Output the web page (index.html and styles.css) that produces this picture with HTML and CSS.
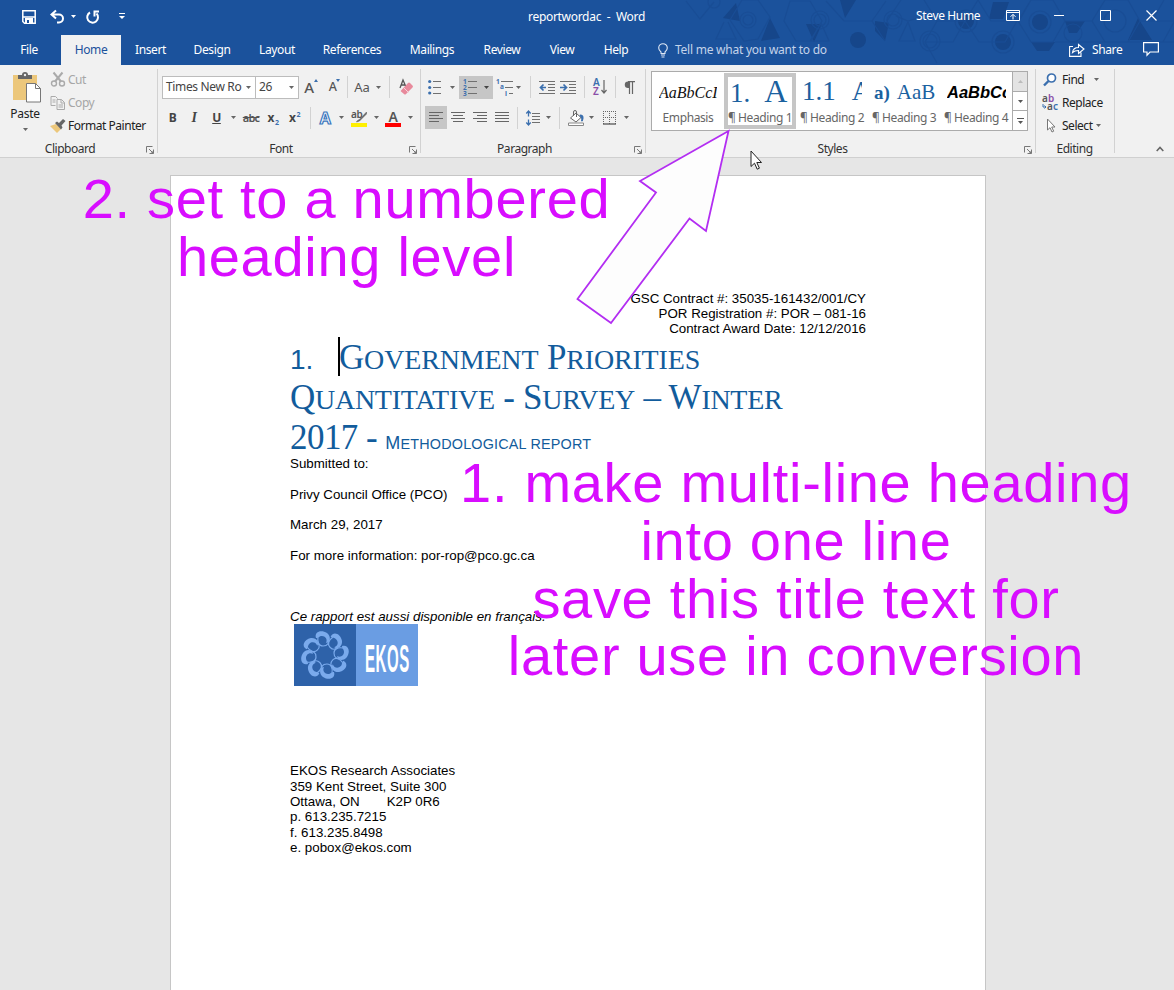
FILE: index.html
```html
<!DOCTYPE html>
<html lang="en">
<head>
<meta charset="utf-8">
<title>reportwordac - Word</title>
<link rel="stylesheet" href="styles.css">
</head>
<body>
<svg class="defs" width="0" height="0">
  <symbol id="dd" viewBox="0 0 5 3"><path d="M0 0h5L2.500 3z" fill="currentColor"/></symbol>
  <symbol id="launch" viewBox="0 0 8 8"><path d="M.5 6.500v-6h6M3 3l4 4M7.500 3.500v4h-4" fill="none" stroke="#777"/><path d="M7.500 4.500v3h-3z" fill="#777"/></symbol>
</svg>
<div class="window">
  <header class="chrome">
    <svg class="pattern" width="494" height="65" viewBox="680 0 494 65">
      <g fill="#16468a">
        <path d="M736 3l4 18-17-3zM770 18l10 20-19 3zM806 24h16l-8 18zM840 0h16l-11 18zM875 21l14 2-4 18-10-10zM1065 21h20l-8 12h-8zM1138 18l14 22h-24zM1031 42h24l-6 9h-12zM993 2h16l-6 17h-14z"/>
        <circle cx="858" cy="40" r="8"/><circle cx="1003" cy="42" r="8"/><circle cx="1040" cy="22" r="8"/><circle cx="966" cy="21" r="8"/>
      </g>
      <g fill="none" stroke="#194d95" stroke-width="1.200">
        <path d="M686 1l14 18 14-17M724 22l-8 17h20l-8-17M742 0l-12 20 14 21 14-2 12-22-12-17zM790 1l20 0 12 20-12 20h-14l-12-20zM826 1l18 20h28l14-20M822 21l-11 20h18l-8-18M872 21l13 20M908 22l-9 19h16l-7-19M887 21l14-21M924 0l13 21-12 21 12 21M937 21h28l13-21M925 42h28l12-21 14 21h26l12-21M978 0l13 21h28l12-21M1018 21l13 21h22l12-21-12-21h-22zM1065 21h27l13-21M1092 21l13 21h23l12-21-12-21h-23zM1055 42h50M1128 42h46M1140 21h34M1152 21l12-21M1163 42l11-20M896 16l12 5 14-4"/>
        <circle cx="748" cy="20" r="8"/><circle cx="748" cy="20" r="5"/><circle cx="820" cy="20" r="9"/><circle cx="820" cy="20" r="6"/><circle cx="893" cy="20" r="9"/><circle cx="893" cy="20" r="6"/><circle cx="930" cy="41" r="10"/><circle cx="930" cy="41" r="7"/><circle cx="1003" cy="42" r="11"/><circle cx="1040" cy="22" r="11"/><circle cx="1073" cy="33" r="9"/><circle cx="1115" cy="21" r="11"/><circle cx="714" cy="2" r="6"/><circle cx="966" cy="21" r="11"/>
      </g>
    </svg>
    <div class="titlebar">
      <div class="quick">
        <svg width="14" height="14" viewBox="0 0 14 14"><path d="M.8.800h12.400v12.400H2.500L.8 11.500z" fill="none" stroke="#fff" stroke-width="1.500"/><path d="M1 6.300h12v1.500H1zM3 8h8v6H3z" fill="#fff"/><path d="M5 10h2v3H5z" fill="#1b529c"/></svg>
        <svg class="undo" width="15" height="15" viewBox="0 0 15 15"><path d="M6 1.500L1.500 5.500 6 9.500M2 5.500h7a4 4 0 010 8H7" fill="none" stroke="#fff" stroke-width="2"/></svg>
        <svg class="undo-dd" width="5" height="3"><use href="#dd"/></svg>
        <svg class="redo" width="14" height="14" viewBox="0 0 14 14"><path d="M4 2.500a5.400 5.400 0 106.500 1M7.500 1.500h5.500M8.500 1.500v5" fill="none" stroke="#fff" stroke-width="2"/></svg>
        <svg class="custom" width="6" height="7" viewBox="0 0 6 7"><path d="M0 .5h6" stroke="#fff"/><path d="M0 3h6L3 6z" fill="#fff"/></svg>
      </div>
      <div class="doc-title">reportwordac&nbsp; -&nbsp; Word</div>
      <div class="user">Steve Hume</div>
      <div class="controls">
        <svg width="14" height="11" viewBox="0 0 14 11"><path d="M.5.500h13v10H.5zM.5 2.500h13M7 9.500V4.500M4.500 6.800L7 4.300l2.500 2.500" fill="none" stroke="#fff"/></svg>
        <svg width="10" height="11" viewBox="0 0 10 11"><path d="M0 5.500h10" stroke="#fff"/></svg>
        <svg width="11" height="11" viewBox="0 0 11 11"><path d="M.5.500h10v10H.5z" fill="none" stroke="#fff"/></svg>
        <svg width="11" height="11" viewBox="0 0 11 11"><path d="M.5.500l10 10M10.500.500l-10 10" fill="none" stroke="#fff" stroke-width="1.200"/></svg>
      </div>
    </div>
    <nav class="tabs">
      <span>File</span><span class="active">Home</span><span>Insert</span><span>Design</span><span>Layout</span><span>References</span><span>Mailings</span><span>Review</span><span>View</span><span>Help</span>
      <div class="tell"><svg width="10" height="15" viewBox="0 0 10 15"><path d="M3 10.500V9C1.500 7.800.7 6.800.7 5a4.300 4.300 0 018.600 0C9.300 6.800 8.500 7.800 7 9v1.500zM3 12h4M3.500 14h3" fill="none" stroke="#dfe8f5" stroke-width="1.100"/></svg>Tell me what you want to do</div>
      <div class="share"><svg width="16" height="14" viewBox="0 0 16 14"><path d="M4 3.500H.6v9.900H12V9.500M3.500 9.500C4 6 6 4.500 9.500 4.500V1.500L15 6l-5.500 4.500V7.500C7 7.500 5 8 3.500 9.500z" fill="none" stroke="#fff" stroke-width="1.100"/></svg>Share</div>
      <svg class="comment" width="16" height="14" viewBox="0 0 16 14"><path d="M.6.600h14.800v9.400H7l-3 3.200V10H.6z" fill="none" stroke="#fff" stroke-width="1.200"/></svg>
    </nav>
  </header>

  <div class="ribbon">
    <section class="group clipboard">
      <div class="body">
        <div class="paste">
          <svg width="29" height="31" viewBox="0 0 29 31"><path d="M1 3h24v25H1z" fill="#ecc77b"/><path d="M6 7V3h4a3 3 0 016 0h4v4z" fill="#666"/><circle cx="13" cy="3" r="1.200" fill="#eee"/><path d="M14.500 11.500h9l5 5v13.500h-14z" fill="#fff" stroke="#777"/><path d="M23.500 11.500v5h5" fill="none" stroke="#777"/></svg>
          <span>Paste</span>
          <svg width="5" height="3"><use href="#dd"/></svg>
        </div>
        <div class="clip-list">
          <div class="off"><svg width="15" height="15" viewBox="0 0 15 15"><g fill="none" stroke="#aaa" stroke-width="1.400"><circle cx="3.500" cy="11.500" r="2.500"/><circle cx="11.500" cy="11.500" r="2.500"/><path d="M3 .5l7.500 9M12 .5l-7.500 9" stroke-width="2"/></g></svg>Cut</div>
          <div class="off"><svg width="15" height="14" viewBox="0 0 15 14"><path d="M7 2.500L5 .5H.5v9H5M6.500 3.500h4.500l3 3v7H6.500zM10.500 3.500v3.500h3.500M2 4h3M2 6h3M8 9h4.500M8 11h4.500" fill="none" stroke="#aaa"/></svg>Copy</div>
          <div><svg width="16" height="14" viewBox="0 0 16 14"><path d="M0 7l6-2 5 5-4 4z" fill="#ecc77b"/><path d="M5 4l2-1.500 2 1.500 4-4 2.500 2-4 4.500 1 2-1.500 2z" fill="#666"/></svg>Format Painter</div>
        </div>
      </div>
      <footer><span>Clipboard</span><svg width="8" height="8"><use href="#launch"/></svg></footer>
    </section>

    <section class="group font">
      <div class="body rows">
        <div class="row font-1">
          <div class="combo"><span>Times New Ro</span><svg width="5" height="3"><use href="#dd"/></svg></div>
          <div class="combo size"><span>26</span><svg width="5" height="3"><use href="#dd"/></svg></div>
          <div class="grow"><b>A</b><svg width="4" height="3" viewBox="0 0 4 3"><path d="M0 3L2 0l2 3z" fill="#3b6fae"/></svg></div>
          <div class="grow shrink"><b>A</b><svg width="4" height="3" viewBox="0 0 4 3"><path d="M0 0l2 3 2-3z" fill="#3b6fae"/></svg></div>
          <i class="sep"></i>
          <span class="aa">Aa</span>
          <svg width="5" height="3"><use href="#dd"/></svg>
          <i class="sep"></i>
          <svg width="16" height="16" viewBox="0 0 16 16"><path d="M2 9L5 1l3 7M3 6h4" fill="none" stroke="#555" stroke-width="1.300"/><path d="M3 11.500L10 4q1-1 2 0l2.500 2.500q1 1 0 2L8 15q-1 1-2 0l-3-2.500q-.6-.5 0-1z" fill="#e88a9c"/><path d="M5.500 8.500l5 5" stroke="#f7d5da"/></svg>
        </div>
        <div class="row font-2">
          <b>B</b><span class="ital">I</span><b class="und">U</b><svg width="5" height="3"><use href="#dd"/></svg>
          <span class="strike">abc</span><span class="xx">x<sub>2</sub></span><span class="xx">x<sup>2</sup></span><i class="sep"></i>
          <svg width="16" height="16" viewBox="0 0 16 16"><text x="8" y="13.500" text-anchor="middle" class="outline-a">A</text></svg>
          <svg width="5" height="3"><use href="#dd"/></svg>
          <svg width="16" height="18" viewBox="0 0 16 18"><text x="0" y="9" class="mini">ab</text><path d="M15.500 3L9 10l-3 2-.5 1 3-1L15.500 5z" fill="#666" stroke="#666" stroke-width=".6"/><path d="M0 14h16v4H0z" fill="#fff000"/></svg>
          <svg width="5" height="3"><use href="#dd"/></svg>
          <svg width="16" height="18" viewBox="0 0 16 18"><text x="8" y="13" text-anchor="middle" class="big-a">A</text><path d="M0 14h16v4H0z" fill="#f00"/></svg>
          <svg width="5" height="3"><use href="#dd"/></svg>
        </div>
      </div>
      <footer><span>Font</span><svg width="8" height="8"><use href="#launch"/></svg></footer>
    </section>

    <section class="group paragraph">
      <div class="body rows">
        <div class="row para-1">
          <svg width="14" height="16" viewBox="0 0 14 16"><path d="M5 2.500h8M5 8.500h8M5 14.500h8" stroke="#707070"/><g fill="#3b6fae"><circle cx="1.700" cy="2.500" r="1.600"/><circle cx="1.700" cy="8.500" r="1.600"/><circle cx="1.700" cy="14" r="1.600"/></g></svg>
          <svg width="5" height="3"><use href="#dd"/></svg>
          <div class="pressed"><svg width="14" height="17" viewBox="0 0 14 17"><path d="M5 2.500h9M5 8.500h9M5 14.500h9" stroke="#707070"/><g class="nums"><text x="0" y="5">1</text><text x="0" y="11">2</text><text x="0" y="17">3</text></g></svg><svg width="5" height="3"><use href="#dd"/></svg></div>
          <svg width="17" height="17" viewBox="0 0 17 17"><path d="M5 2.500h12M9 8.500h8M13 14.500h4" stroke="#707070"/><g class="nums"><text x="0" y="5">1</text><text x="4" y="10">a</text><text x="9" y="17">i</text></g></svg>
          <svg width="5" height="3"><use href="#dd"/></svg><i class="sep"></i>
          <svg width="16" height="13" viewBox="0 0 16 13"><path d="M0 .5h16M9 3.500h7M9 6.500h7M9 9.500h7M0 12.500h16" stroke="#707070"/><path d="M7 6.500H2M4.500 3.500L1.500 6.500l3 3" fill="none" stroke="#3b6fae" stroke-width="1.700"/></svg>
          <svg width="16" height="13" viewBox="0 0 16 13"><path d="M0 .5h16M9 3.500h7M9 6.500h7M9 9.500h7M0 12.500h16" stroke="#707070"/><path d="M0 6.500h6M3.500 3.500l3 3-3 3" fill="none" stroke="#3b6fae" stroke-width="1.700"/></svg>
          <i class="sep"></i>
          <svg width="14" height="16" viewBox="0 0 14 16"><text x="0" y="7" class="sort-a">A</text><text x="0" y="16" class="sort-z">Z</text><path d="M11 1v13M8.500 11l2.500 3 2.500-3" fill="none" stroke="#666" stroke-width="1.200"/></svg>
          <i class="sep"></i>
          <svg width="11" height="13" viewBox="0 0 11 13"><path d="M5 .6H4a3.200 3.200 0 000 6.400h1z" fill="#666"/><path d="M5.500 1v12M8.500 1v12M4 .6h7" stroke="#666" stroke-width="1.200"/></svg>
        </div>
        <div class="row para-2">
          <div class="pressed"><svg width="14" height="11" viewBox="0 0 14 11"><path d="M0 .5h14M0 3.500h10M0 6.500h14M0 9.500h10" stroke="#666"/></svg></div>
          <svg width="14" height="11" viewBox="0 0 14 11"><path d="M0 .5h14M2 3.500h10M0 6.500h14M2 9.500h10" stroke="#666"/></svg>
          <svg width="14" height="11" viewBox="0 0 14 11"><path d="M0 .5h14M4 3.500h10M0 6.500h14M4 9.500h10" stroke="#666"/></svg>
          <svg width="14" height="11" viewBox="0 0 14 11"><path d="M0 .5h14M0 3.500h14M0 6.500h14M0 9.500h14" stroke="#666"/></svg>
          <i class="sep"></i>
          <svg width="14" height="16" viewBox="0 0 14 16"><path d="M6 3.500h8M6 6.500h8M6 9.500h8M6 12.500h8" stroke="#707070"/><path d="M2.500 1v5.500M2.500 9.500V15M.3 3.500l2.200-2.500 2.200 2.500M.3 12.500L2.500 15l2.200-2.500" fill="none" stroke="#3b6fae" stroke-width="1.300"/></svg>
          <svg width="5" height="3"><use href="#dd"/></svg><i class="sep"></i>
          <svg width="16" height="16" viewBox="0 0 16 16"><path d="M2.500 8L8 3l5 4.500L8 12z" fill="#fff" stroke="#666"/><path d="M5.500 6V2q0-1.500 1.500-1.500T8.500 2v5" fill="none" stroke="#666"/><path d="M12 4.500q4 0 3.500 4T13 11q1-3-1.500-5z" fill="#3b6fae"/><path d="M.5 13h15v2.500H.5z" fill="#fff" stroke="#888"/></svg>
          <svg width="5" height="3"><use href="#dd"/></svg>
          <svg width="13" height="14" viewBox="0 0 13 14"><path d="M.5 0v13M6.500 0v13M12.500 0v13M0 .5h13M0 6.500h13" stroke="#666" stroke-dasharray="1 1"/><path d="M0 13h13" stroke="#555" stroke-width="1.300"/></svg>
          <svg width="5" height="3"><use href="#dd"/></svg>
        </div>
      </div>
      <footer><span>Paragraph</span><svg width="8" height="8"><use href="#launch"/></svg></footer>
    </section>

    <section class="group styles">
      <div class="body">
        <div class="gallery">
          <div class="style emph"><div>AaBbCcI</div><span>Emphasis</span></div>
          <div class="style h1 sel"><div>1.<em>A</em></div><span>¶ Heading 1</span></div>
          <div class="style h2"><div>1.1<em>A</em></div><span>¶ Heading 2</span></div>
          <div class="style h3"><div><b>a)</b><em>AaB</em></div><span>¶ Heading 3</span></div>
          <div class="style h4"><div>AaBbCc</div><span>¶ Heading 4</span></div>
          <div class="scroll">
            <i class="dim"><svg width="5" height="3" viewBox="0 0 5 3"><path d="M0 3L2.500 0 5 3z" fill="#bbb"/></svg></i>
            <i><svg width="5" height="3"><use href="#dd"/></svg></i>
            <i><svg width="7" height="6" viewBox="0 0 7 6"><path d="M0 .5h7" stroke="#555"/><path d="M1 3h5L3.500 6z" fill="#555"/></svg></i>
          </div>
        </div>
      </div>
      <footer><span>Styles</span><svg width="8" height="8"><use href="#launch"/></svg></footer>
    </section>

    <section class="group editing">
      <div class="body edit-list">
        <div><svg width="14" height="14" viewBox="0 0 14 14"><circle cx="8.500" cy="5" r="4" fill="#fff" stroke="#3b6fae" stroke-width="1.700"/><path d="M5.500 8L1 12.500" stroke="#3b6fae" stroke-width="2.400"/></svg>Find<svg class="dd" width="5" height="3"><use href="#dd"/></svg></div>
        <div><svg width="16" height="16" viewBox="0 0 16 16"><text x="0" y="7" class="mini">a</text><text x="6" y="7" class="mini vio">b</text><text x="5" y="15" class="mini">a</text><text x="11" y="15" class="mini blu">c</text><path d="M1 9v3h3M2.500 10.500L4 12l-1.500 1.500" fill="none" stroke="#3b6fae"/></svg>Replace</div>
        <div><svg width="14" height="15" viewBox="0 0 14 15"><path d="M4.500 1v11l2.500-2.300 2 4.300 1.700-.8-2-4.200h3.300z" fill="#fff" stroke="#777"/></svg>Select<svg class="dd near" width="5" height="3"><use href="#dd"/></svg></div>
      </div>
      <footer><span>Editing</span></footer>
    </section>
    <svg class="collapse" width="8" height="6" viewBox="0 0 8 6"><path d="M.7 5L4 1.500 7.300 5" fill="none" stroke="#666" stroke-width="1.600"/></svg>
  </div>

  <main class="canvas">
    <article class="page">
      <div class="meta"><p>GSC Contract #: 35035-161432/001/CY</p><p>POR Registration #: POR – 081-16</p><p>Contract Award Date: 12/12/2016</p></div>
      <h1>
        <span class="line l1"><span class="num">1.</span><i class="caret"></i><span>G<small>OVERNMENT</small> P<small>RIORITIES</small></span></span>
        <span class="line l2">Q<small>UANTITATIVE</small> - S<small>URVEY</small> – W<small>INTER</small></span>
        <span class="line l3">2017 - <span class="sub">M<small>ETHODOLOGICAL REPORT</small></span></span>
      </h1>
      <div class="text">
        <p>Submitted to:</p><p>Privy Council Office (PCO)</p><p>March 29, 2017</p><p>For more information: por-rop@pco.gc.ca</p>
        <p class="fr">Ce rapport est aussi disponible en français.</p>
      </div>
      <svg class="logo" width="124" height="62" viewBox="0 0 124 62">
        <path d="M0 0h62v62H0z" fill="#2e62a9"/><path d="M62 0h62v62H62z" fill="#6a9de3"/>
        <defs><g id="curl"><path d="M22 14c-2-6 5-9 11-5 4 3 4 9-1 10 2-4-1-7-4-7-3 0-3 2-6 2z"/><path d="M24 13c-1 5 1 9 5 9 5 0 6-3 5-7" fill="none" stroke="#7aaaec" stroke-width="1.200"/></g></defs>
        <g fill="#7aaaec">
          <use href="#curl"/><use href="#curl" transform="rotate(45 31 31)"/><use href="#curl" transform="rotate(90 31 31)"/><use href="#curl" transform="rotate(135 31 31)"/><use href="#curl" transform="rotate(180 31 31)"/><use href="#curl" transform="rotate(225 31 31)"/><use href="#curl" transform="rotate(270 31 31)"/><use href="#curl" transform="rotate(315 31 31)"/>
        </g>
        <text x="71" y="47.500" textLength="45" lengthAdjust="spacingAndGlyphs">EKOS</text>
      </svg>
      <address>EKOS Research Associates<br>359 Kent Street, Suite 300<br>Ottawa, ON<span class="tab"></span>K2P 0R6<br>p. 613.235.7215<br>f. 613.235.8498<br>e. pobox@ekos.com</address>
    </article>
  </main>
</div>

<svg class="arrow" width="180" height="220" viewBox="565 120 180 220"><path d="M728.500 131L640 181l16 11.500L577.500 299l33.500 24 78.500-104.500L706 231z" fill="#fdfdfd" stroke="#b32ef2" stroke-width="1.800"/></svg>
<svg class="pointer" width="13" height="21" viewBox="0 0 13 21"><path d="M1 1v15.500l3.500-3.300 2.700 6 2.200-1-2.600-5.700h4.700z" fill="#fff" stroke="#222"/></svg>
<div class="note note-two">2. set to a numbered<br>heading level</div>
<div class="note note-one">1. make multi-line heading<br>into one line<br>save this title text for<br>later use in conversion</div>
</body>
</html>
```

FILE: styles.css
```css
* { box-sizing: border-box; }
body { margin: 0; width: 1174px; height: 990px; overflow: hidden; position: relative; font: 12px/16px "Noto Sans", "Open Sans", sans-serif; letter-spacing: -0.47px; color: #222; }
p, h1 { margin: 0; }
svg { display: block; flex: none; overflow: visible; }
.defs { position: absolute; }
.window { display: flex; flex-direction: column; height: 990px; }

.chrome { position: relative; height: 65px; background: #1b529c; color: #fff; }
.pattern { position: absolute; right: 0; top: 0; overflow: hidden; }
.titlebar { position: relative; height: 35px; display: grid; grid-template-columns: 528px 388px 90px 168px; align-items: center; padding-bottom: 2px; }
.quick { display: flex; align-items: center; padding-left: 22px; }
.undo { margin-left: 14px; }
.undo-dd { margin-left: 6px; }
.redo { margin-left: 10px; }
.custom { margin-left: 19px; }
.doc-title { letter-spacing: -0.3px; }
.user { padding-bottom: 2px; letter-spacing: -0.35px; }
.controls { display: flex; align-items: center; gap: 34px; padding-bottom: 3px; }
.controls svg:nth-child(2) { margin-right: 2px; }
.controls svg:nth-child(4) { margin-left: 1px; }
.tabs { position: relative; display: flex; height: 30px; line-height: 30px; letter-spacing: -0.38px; }
.tabs > span { text-align: center; }
.tabs > span:nth-child(1) { width: 58px; margin-right: 3px; }
.tabs > span:nth-child(2) { width: 60px; }
.tabs > span:nth-child(3) { width: 59px; }
.tabs > span:nth-child(4) { width: 64px; }
.tabs > span:nth-child(5) { width: 66px; }
.tabs > span:nth-child(6) { width: 84px; }
.tabs > span:nth-child(7) { width: 76px; }
.tabs > span:nth-child(8) { width: 64px; }
.tabs > span:nth-child(9) { width: 56px; }
.tabs > span:nth-child(10) { width: 52px; }
.tabs .active { background: #f1f1f1; color: #1b529c; }
.tell { display: flex; align-items: center; gap: 7px; width: 411px; padding-left: 16px; color: #c3d3ea; letter-spacing: -0.24px; }
.share { display: flex; align-items: center; gap: 7px; padding-left: 16px; width: 90px; }
.comment { margin: 7px 0 0 0; }

.ribbon { display: flex; height: 93px; background: #f1f1f1; border-bottom: 1px solid #d0d0d0; color: #666; }
.group { position: relative; display: flex; flex-direction: column; height: 92px; padding-top: 4px; }
.group::after { content: ""; position: absolute; right: 0; top: 4px; bottom: 4px; width: 1px; background: #d2d2d2; }
.body { height: 72px; display: flex; }
.group footer { display: flex; align-items: center; height: 16px; color: #333; }
.group footer span { flex: 1; text-align: center; }
.group footer svg { margin: 2px 4px 0 0; }
.clipboard { width: 158px; }
.clipboard footer span { padding-right: 6px; }
.font { width: 263px; }
.font footer span { padding-right: 5px; }
.paragraph { width: 225px; }
.paragraph footer span { padding-right: 6px; }
.styles { width: 390px; }
.styles footer span { padding-right: 5px; }
.editing { width: 79px; }
.editing footer { padding-right: 2px; }

.paste { width: 50px; display: flex; flex-direction: column; align-items: center; color: #222; padding-top: 3px; letter-spacing: -0.3px; }
.paste svg { margin-left: 3px; }
.paste span { margin-top: 3px; }
.paste > svg:last-child { margin: 6px 0 0; color: #666; }
.clip-list { color: #222; margin-top: -1px; }
.clip-list div { display: flex; align-items: center; gap: 2px; height: 23px; }
.clip-list svg { width: 16px; }
.clip-list .off { color: #a6a6a6; }

.rows { display: block; padding: 3px 4px 0; }
.row { display: grid; height: 31px; align-items: center; justify-items: center; }
.row.font-1, .row.para-1 { height: 30px; }
.font-1 { grid-template-columns: 94px 43px 24px 23px 3px 26px 7px 15px 17px; }
.font-2 { grid-template-columns: 21px 22px 23px 11px 24px 20px 23px 8px 22px 10px 25px 10px 24px 10px; }
.para-1 { grid-template-columns: 20px 14px 34px 22px 7px 16px 17px 25px 8px 24px 6px 23px; }
.para-2 { grid-template-columns: 22px 22px 22px 22px 9px 22px 8px 15px 17px 15px 20px 14px; }
.sep { width: 1px; height: 22px; background: #d2d2d2; }
.combo { display: flex; align-items: center; justify-content: space-between; justify-self: stretch; height: 23px; padding: 0 4px 0 3px; background: #fff; border: 1px solid #bcbcbc; color: #444; letter-spacing: -0.35px; }
.combo.size { border-left: 0; }
.combo svg { color: #666; }
.grow { display: flex; align-items: flex-start; color: #555; }
.grow b { font-size: 15px; font-weight: 500; }
.grow.shrink b { font-size: 12.5px; }
.aa { font-size: 13px; letter-spacing: 0; color: #555; }
.font-2 b { font-size: 12px; color: #444; }
.font-2 .und { text-decoration: underline; }
.ital { font: italic bold 14px "Liberation Serif", serif; color: #444; }
.strike { text-decoration: line-through; font-weight: 600; color: #555; font-size: 11px; letter-spacing: -0.8px; }
.xx { font-weight: bold; color: #444; font-size: 12px; line-height: 14px; }
.xx sub, .xx sup { font-size: 7px; line-height: 0; color: #3b6fae; margin-left: 1px; }
.outline-a { font: bold 16px "Noto Sans", sans-serif; fill: #fff; stroke: #3b77bd; stroke-width: 1.2px; }
.mini { font: 600 10px "Noto Sans", sans-serif; fill: #555; }
.mini.vio { fill: #8a4fa8; }
.mini.blu { fill: #3b6fae; }
.big-a { font: 600 14px "Noto Sans", sans-serif; fill: #555; }
.pressed { display: flex; align-items: center; justify-content: space-around; justify-self: stretch; height: 23px; background: #c6c6c6; color: #444; }
.nums { font: bold 6.5px "Noto Sans", sans-serif; fill: #3b6fae; }
.sort-a { font: 600 10px "Noto Sans", sans-serif; fill: #3b6fae; }
.sort-z { font: 600 10px "Noto Sans", sans-serif; fill: #8a4fa8; }

.styles .body { padding: 2px 0 0 5px; }
.gallery { display: flex; width: 377px; height: 60px; background: #fff; border: 1px solid #ababab; }
.style { width: 72px; height: 56px; margin-top: 1px; text-align: center; color: #666; overflow: hidden; }
.style div { height: 37px; margin: 0 6px; line-height: 37px; overflow: hidden; white-space: nowrap; text-align: left; color: #1a619f; font-family: "Liberation Serif", serif; letter-spacing: 0; }
.style em { font-style: normal; }
.style span { display: block; line-height: 16px; white-space: nowrap; letter-spacing: -0.4px; }
.style.emph div { font-size: 16px; line-height: 39px; font-style: italic; color: #111; margin: 0 7px; }
.sel { border: 4px solid #c6c6c6; }
.style.sel div { height: 33px; line-height: 29px; margin: 0 2px; }
.style.sel span { margin: 0 -2px; }
.style.h1 div { font-size: 27px; }
.h1 em { font-size: 32px; margin-left: 14px; }
.style.h2 div { font-size: 27px; }
.h2 em { margin-left: 16px; }
.style.h3 div { font-size: 21px; margin-right: 5px; line-height: 39px; }
.h3 b { font-size: 19px; }
.h3 em { margin-left: 7px; }
.style.h4 div { font: italic bold 16.5px/39px "Liberation Sans", sans-serif; color: #000; margin: 0 6px 0 7px; }
.scroll { width: 15px; display: grid; grid-template-rows: 20px 19px 19px; border-left: 1px solid #ababab; color: #555; }
.scroll i { display: flex; align-items: center; justify-content: center; border-bottom: 1px solid #ababab; }
.scroll i:last-child { border: 0; }
.scroll .dim { background: #e3e3e3; }

.edit-list { flex-direction: column; padding-left: 6px; margin-top: -1px; height: 73px; color: #222; }
.edit-list div { display: flex; align-items: center; height: 23px; gap: 4px; }
.edit-list div > svg:first-child { width: 16px; }
.edit-list .dd { margin-left: 6px; color: #666; }
.edit-list .near { margin-left: -1px; }
.collapse { margin: 81px 0 0 41px; }

.canvas { flex: 1; background: #e6e6e6; padding: 17px 0 0 170px; overflow: hidden; }
.page { width: 816px; height: 830px; background: #fff; border: 1px solid #c6c6c6; padding: 115px 119px 0; font: 13.33px/15.35px "Liberation Sans", sans-serif; color: #000; letter-spacing: 0; }
.meta { text-align: right; line-height: 15px; }
h1 { font: 35px/40px "Liberation Serif", serif; color: #125c9c; margin-top: 2px; height: 118px; }
.line { display: flex; align-items: baseline; height: 40px; white-space: pre; }
.l1 { letter-spacing: -0.17px; }
.l2 { letter-spacing: -0.28px; }
.l3 { letter-spacing: -0.55px; }
.line small { font-size: 28px; }
.num { font: 28px "Liberation Sans", sans-serif; width: 49px; }
.caret { align-self: flex-start; width: 2px; height: 39px; margin: -1px -1px 0; background: #000; }
.sub { font: 18px "Liberation Sans", sans-serif; letter-spacing: 0.18px; }
.line .sub small { font-size: 14.4px; }
.text p { height: 30.7px; }
.text .fr { margin-top: 30.7px; height: 15px; font-style: italic; }
.logo { margin: 0 0 77px 4px; }
.logo text { font: bold 38px "Liberation Sans Narrow", "Liberation Sans", sans-serif; letter-spacing: 1.5px; fill: #fff; }
address { font-style: normal; }
.tab { display: inline-block; width: 27px; }

.arrow { position: absolute; left: 565px; top: 120px; }
.pointer { position: absolute; left: 750px; top: 150px; }
.note { position: absolute; font: 56px/57.8px "Liberation Sans", sans-serif; color: #d80dff; text-align: center; white-space: nowrap; letter-spacing: 0.7px; }
.note-two { left: 81px; top: 170px; width: 531px; }
.note-one { left: 460px; top: 454px; width: 672px; }
```
